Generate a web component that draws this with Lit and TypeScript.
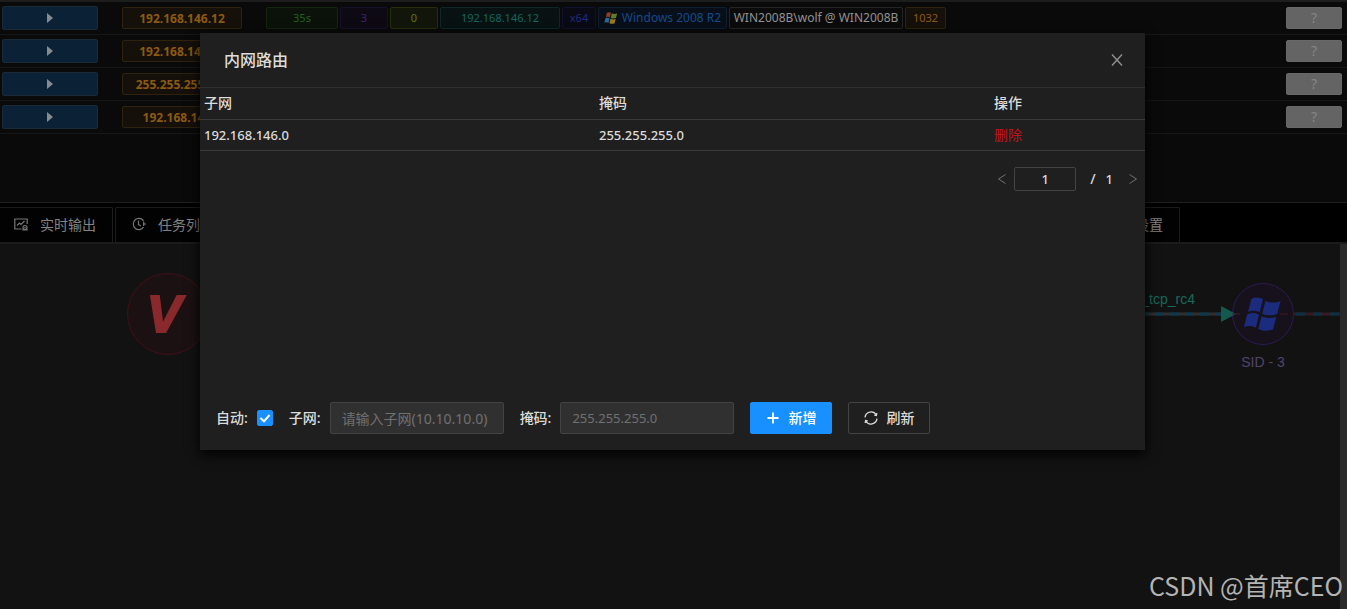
import { LitElement, html, css, svg, nothing } from "lit";
import { customElement, property, state } from "lit/decorators.js";

interface Host {
  ip: string;
  session: boolean;
}

const HOSTS: Host[] = [
  { ip: "192.168.146.12", session: true },
  { ip: "192.168.146.13", session: false },
  { ip: "255.255.255.255", session: false },
  { ip: "192.168.146.1", session: false },
];

// Four panes of the waving Windows flag on a 24 x 24 grid
const flagPanes = (colors: string[]) => svg`
  <path fill=${colors[0]} d="M5 3C7.500 1.500 10 2 12 3.200L10 11C8 9.800 5.500 9.600 3 10.800Z"/>
  <path fill=${colors[1]} d="M13.500 4C16 5.300 19 5.600 22.500 4.300L20.500 12C17.500 13.200 14 13 11.500 11.800Z"/>
  <path fill=${colors[2]} d="M2.500 12.300C5 11 7.500 11.300 9.600 12.500L7.700 20.300C5.500 19 3 18.800 .5 20Z"/>
  <path fill=${colors[3]} d="M11.100 13.300C14 14.600 17 14.800 20 13.600L18 21.300C15 22.400 11.700 22.300 9.200 21Z"/>`;

@customElement("host-row")
export class HostRow extends LitElement {
  @property({ attribute: false }) host!: Host;

  static styles = css`
    :host {
      display: flex;
      align-items: center;
      height: 32px;
      padding: 0 5px 0 2px;
      border-bottom: 1px solid #171717;
      font: 11px/20px "Noto Sans", "Noto Sans CJK SC", sans-serif;
    }
    button {
      font: inherit;
      box-sizing: border-box;
      padding: 0;
      border-radius: 2px;
    }
    .play {
      display: flex;
      align-items: center;
      justify-content: center;
      width: 96px;
      height: 24px;
      background: #0b2136;
      border: 1px solid #1b2a37;
    }
    .tag {
      box-sizing: border-box;
      height: 22px;
      border: 1px solid;
      border-radius: 2px;
      text-align: center;
      white-space: nowrap;
    }
    .ip {
      width: 120px;
      margin: 0 24px;
      font-size: 12px;
      line-height: 22px;
      font-weight: 700;
      color: #8c5a11;
      background: #16100a;
      border-color: #2f230f;
    }
    .tags {
      display: flex;
      gap: 2px;
    }
    .age { width: 72px; color: #266019; background: #0a120a; border-color: #12270e; }
    .count { width: 48px; color: #3c2278; background: #0e0a14; border-color: #17102a; }
    .zero { width: 48px; color: #5c7411; background: #12160a; border-color: #262f0c; }
    .addr { width: 120px; color: #14665f; background: #081212; border-color: #0c2927; }
    .arch { width: 34px; color: #222a80; background: #090a14; border-color: #0f1230; }
    .os {
      display: flex;
      align-items: center;
      justify-content: center;
      gap: 4px;
      width: 129px;
      color: #144a8a;
      background: #080f18; 
      border-color: #0d1e35;
      font-size: 12px;
    }
    .user {
      width: 174px;
      color: #929292;
      background: #0b0b0b;
      border-color: #252525;
      font-size: 12px;
    }
    .pid { width: 41px; color: #8c5a11; background: #16100a; border-color: #2f230f; }
    .unknown {
      width: 56px;
      height: 22px;
      margin-left: auto;
      background: #646464;
      border: 1px solid #686868;
      color: #868686;
      font-size: 14px;
    }
  `;

  render() {
    return html`
      <button class="play" aria-label="展开">
        <svg width="8" height="12" viewBox="0 0 8 12"><path fill="#848b91" d="M1 1L7 6L1 11Z"/></svg>
      </button>
      <span class="tag ip">${this.host.ip}</span>
      ${this.host.session
        ? html`<div class="tags">
            <span class="tag age">35s</span>
            <span class="tag count">3</span>
            <span class="tag zero">0</span>
            <span class="tag addr">192.168.146.12</span>
            <span class="tag arch">x64</span>
            <span class="tag os">
              <svg width="14" height="14" viewBox="0 0 24 24">
                ${flagPanes(["#8b4126", "#5f7f22", "#286a94", "#98791f"])}
              </svg>
              Windows 2008 R2
            </span>
            <span class="tag user">WIN2008B\\wolf @ WIN2008B</span>
            <span class="tag pid">1032</span>
          </div>`
        : nothing}
      <button class="unknown">?</button>
    `;
  }
}

@customElement("session-graph")
export class SessionGraph extends LitElement {
  static styles = css`
    :host {
      display: block;
      position: relative;
      overflow: hidden;
      background: #121212;
      font: 14px/20px "Liberation Sans", sans-serif;
    }
    .node {
      position: absolute;
      box-sizing: border-box;
      border-radius: 50%;
      display: flex;
      align-items: center;
      justify-content: center;
    }
    .viper {
      left: 127px;
      top: 29px;
      width: 82px;
      height: 82px;
      padding-right: 8px;
      border: 1px solid #430f16;
      background: #1b1113;
      color: #8a292b;
      font-size: 52px;
      font-weight: 700;
      font-style: italic;
      -webkit-text-stroke: 2px #8a292b;
    }
    .session {
      left: 1232px;
      top: 39px;
      width: 62px;
      height: 62px;
      border: 1px solid #2e1a55;
      background: #17111c;
    }
    .edges {
      position: absolute;
      left: 0;
      top: 59px;
    }
    .edge-label {
      position: absolute;
      left: 1045px;
      width: 150px;
      top: 45px;
      text-align: right;
      color: #17695b;
    }
    .node-label {
      position: absolute;
      left: 1213px;
      width: 100px;
      top: 108px;
      text-align: center;
      color: #50446e;
    }
    .track {
      position: absolute;
      right: 0;
      top: 0;
      bottom: 0;
      width: 7px;
      background: #2a2a2a;
    }
  `;

  render() {
    return html`
      <div class="node viper">V</div>
      <span class="edge-label">reverse_tcp_rc4</span>
      <div class="node session">
        <svg width="40" height="40" viewBox="0 0 24 24">
          ${flagPanes(["#1b2b7d", "#1b2b7d", "#1b2b7d", "#1b2b7d"])}
        </svg>
      </div>
      <svg class="edges" width="1340" height="22" viewBox="0 0 1340 22">
        <path d="M210 11H1232" stroke="#342f2d" stroke-width="3"/>
        <path d="M210 11H1222" stroke="#0c3850" stroke-width="3" stroke-dasharray="9 6"/>
        <path d="M1221 3L1236 11L1221 19Z" fill="#14594f"/>
        <path d="M1232 11H1294" stroke="#4b1726" stroke-width="1" stroke-dasharray="8 40"/>
        <path d="M1294 11H1340" stroke="#391a22" stroke-width="3"/>
        <path d="M1296 11H1340" stroke="#0c3147" stroke-width="3" stroke-dasharray="9 8"/>
      </svg>
      <span class="node-label">SID - 3</span>
      <div class="track"></div>
    `;
  }
}

@customElement("route-dialog")
export class RouteDialog extends LitElement {
  @state() private auto = true;

  static styles = css`
    :host {
      display: block;
      background: #1f1f1f;
      color: #dcdcdc;
      box-shadow: 0 4px 12px #000;
      font: 14px/22px "Noto Sans", "Noto Sans CJK SC", sans-serif;
    }
    button,
    input {
      font: inherit;
      color: inherit;
      box-sizing: border-box;
      margin: 0;
      border-radius: 2px;
    }
    svg {
      fill: none;
      stroke: currentColor;
    }
    header {
      display: flex;
      align-items: center;
      justify-content: space-between;
      height: 54px;
      padding: 0 20px 0 24px;
      border-bottom: 1px solid #303030;
    }
    h2 {
      margin: 0;
      font-size: 16px;
      font-weight: 500;
    }
    .icon-button {
      display: flex;
      align-items: center;
      justify-content: center;
      padding: 0;
      background: none;
      border: 0;
      color: #909090;
    }
    .close {
      width: 16px;
      height: 16px;
    }
    .content {
      min-height: 298px;
    }
    table {
      width: 100%;
      table-layout: fixed;
      border-collapse: collapse;
    }
    th,
    td {
      box-sizing: border-box;
      height: 31px;
      padding: 0 4px;
      border-bottom: 1px solid #3a3a3a;
      text-align: left;
      line-height: 22px;
    }
    th {
      font-weight: 500;
    }
    td {
      font-size: 13px;
      font-weight: 500;
    }
    .wide {
      width: 41.8%;
    }
    .delete {
      color: #c41318;
      font-size: 14px;
      font-weight: 400;
      text-decoration: none;
    }
    .pager {
      display: flex;
      align-items: center;
      justify-content: flex-end;
      height: 24px;
      margin-top: 16px;
      padding-right: 6px;
      font-weight: 500;
    }
    .pager .icon-button {
      width: 12px;
      height: 24px;
      color: #707070;
    }
    .page {
      width: 62px;
      height: 24px;
      margin-left: 6px;
      margin-right: 14px;
      padding: 0;
      text-align: center;
      background: transparent;
      border: 1px solid #434343;
      font-size: 13px;
    }
    .total {
      margin-right: 14px;
      font-size: 13px;
    }
    .slash {
      margin-right: 10px;
    }
    footer {
      display: flex;
      align-items: center;
      gap: 16px;
      padding: 16px;
      font-weight: 500;
    }
    .field {
      display: flex;
      align-items: center;
      gap: 9px;
      white-space: nowrap;
    }
    .check {
      display: grid;
      width: 16px;
      height: 16px;
    }
    .check > * {
      grid-area: 1 / 1;
    }
    .check input {
      appearance: none;
      width: 16px;
      height: 16px;
      background: #303030;
      border: 1px solid #434343;
    }
    .check input:checked {
      background: #1890ff;
      border-color: #1890ff;
    }
    .check svg {
      color: #fff;
      pointer-events: none;
    }
    .text {
      width: 174px;
      height: 32px;
      padding: 0 11px;
      background: #303030;
      border: 1px solid #434343;
      font-weight: 400;
    }
    .mask {
      font-size: 13px;
    }
    .text::placeholder {
      color: #707070;
      opacity: 1;
    }
    .action {
      display: flex;
      align-items: center;
      justify-content: center;
      gap: 8px;
      width: 82px;
      height: 32px;
      padding: 0;
      background: transparent;
      border: 1px solid #434343;
    }
    .primary {
      color: #fff;
      background: #1890ff;
      border-color: #1890ff;
    }
  `;

  render() {
    return html`
      <header>
        <h2>内网路由</h2>
        <button class="icon-button close" aria-label="关闭">
          <svg width="16" height="16" viewBox="0 0 16 16" stroke-width="1.400"><path d="M3 2.500L13 13.500M13 2.500L3 13.500"/></svg>
        </button>
      </header>
      <div class="content">
        <table>
          <thead>
            <tr><th class="wide">子网</th><th class="wide">掩码</th><th>操作</th></tr>
          </thead>
          <tbody>
            <tr>
              <td>192.168.146.0</td>
              <td>255.255.255.0</td>
              <td><a class="delete" href="#">删除</a></td>
            </tr>
          </tbody>
        </table>
        <div class="pager">
          <button class="icon-button" aria-label="上一页">
            <svg width="12" height="12" viewBox="0 0 12 12"><path d="M9.500 1.500L2.500 6L9.500 10.500"/></svg>
          </button>
          <input class="page" aria-label="页码" .value=${"1"} />
          <span class="slash">/</span><span class="total">1</span>
          <button class="icon-button" aria-label="下一页">
            <svg width="12" height="12" viewBox="0 0 12 12"><path d="M2.500 1.500L9.500 6L2.500 10.500"/></svg>
          </button>
        </div>
      </div>
      <footer>
        <div class="field">
          <label for="auto">自动:</label>
          <span class="check">
            <input
              id="auto"
              type="checkbox"
              .checked=${this.auto}
              @change=${(e: Event) => (this.auto = (e.target as HTMLInputElement).checked)}
            />
            ${this.auto
              ? html`<svg width="16" height="16" viewBox="0 0 16 16" stroke-width="2"><path d="M3.500 8L7 11.300L12.500 5"/></svg>`
              : nothing}
          </span>
        </div>
        <div class="field">
          <label for="subnet">子网:</label>
          <input id="subnet" class="text" placeholder="请输入子网(10.10.10.0)" />
        </div>
        <div class="field">
          <label for="mask">掩码:</label>
          <input id="mask" class="text mask" placeholder="255.255.255.0" />
        </div>
        <button class="action primary">
          <svg width="14" height="14" viewBox="0 0 14 14" stroke-width="1.800"><path d="M7 1.500V12.500M1.500 7H12.500"/></svg>
          新增
        </button>
        <button class="action">
          <svg width="14" height="14" viewBox="0 0 14 14" stroke-width="1.300">
            <path d="M1 6.300A6.100 6.100 0 0 1 12.300 4M13 7.700A6.100 6.100 0 0 1 1.700 10"/>
            <path d="M12.800 2L12.400 4.400L10.300 4.100M1.200 12L1.600 9.600L3.700 9.900"/>
          </svg>
          刷新
        </button>
      </footer>
    `;
  }
}

@customElement("app-root")
export class AppRoot extends LitElement {
  static styles = css`
    :host {
      display: flex;
      flex-direction: column;
      position: relative;
      height: 100vh;
      overflow: hidden;
      background: #000;
      font: 14px/22px "Noto Sans CJK SC", sans-serif;
    }
    .hosts {
      box-sizing: border-box;
      height: 203px;
      border-top: 2px solid #1d1d1d;
      border-bottom: 1px solid #1f1f1f;
      background: #0a0a0a;
    }
    .tabs {
      display: flex;
      gap: 2px;
      margin-left: -3px;
      padding: 4px 167px 0 0;
      border-bottom: 2px solid #1b1b1b;
    }
    .tab {
      display: flex;
      align-items: center;
      gap: 12px;
      height: 35px;
      padding: 0 16px 2px;
      background: #020202;
      border: 1px solid #1c1c1c;
      border-bottom: 0;
      border-radius: 2px 2px 0 0;
      color: #828282;
      font: inherit;
    }
    .tab svg {
      fill: none;
      stroke: #777;
      stroke-width: 1.2;
    }
    .last {
      margin-left: auto;
    }
    session-graph {
      flex: 1;
    }
    .overlay {
      position: absolute;
      inset: 0;
      padding: 33px 202px 0 200px;
    }
    .watermark {
      position: absolute;
      right: 4px;
      bottom: 6px;
      color: #b4b4b4;
      font-size: 25px;
      line-height: 36px;
    }
  `;

  render() {
    return html`
      <section class="hosts">
        ${HOSTS.map((host) => html`<host-row .host=${host}></host-row>`)}
      </section>
      <nav class="tabs">
        <button class="tab">
          <svg width="14" height="14" viewBox="0 0 14 14">
            <path d="M7.500 12H.8V2H13.200V7M3 8.500L5.500 6L7 7.500L10.500 4"/>
            <circle cx="11" cy="10.500" r="2"/><path d="M11 9.800V11.200M8.300 12.800H13.700"/>
          </svg>
          实时输出
        </button>
        <button class="tab">
          <svg width="14" height="14" viewBox="0 0 14 14">
            <path d="M11.500 10.200A5.600 5.600 0 1 1 11.500 3.800M6.500 3.500V7.500L8.800 9M11 7H14M11.700 4.500V9"/>
          </svg>
          任务列表
        </button>
        <button class="tab last">设置</button>
      </nav>
      <session-graph></session-graph>
      <div class="overlay">
        <route-dialog role="dialog" aria-label="内网路由"></route-dialog>
      </div>
      <div class="watermark">CSDN @首席CEO</div>
    `;
  }
}
